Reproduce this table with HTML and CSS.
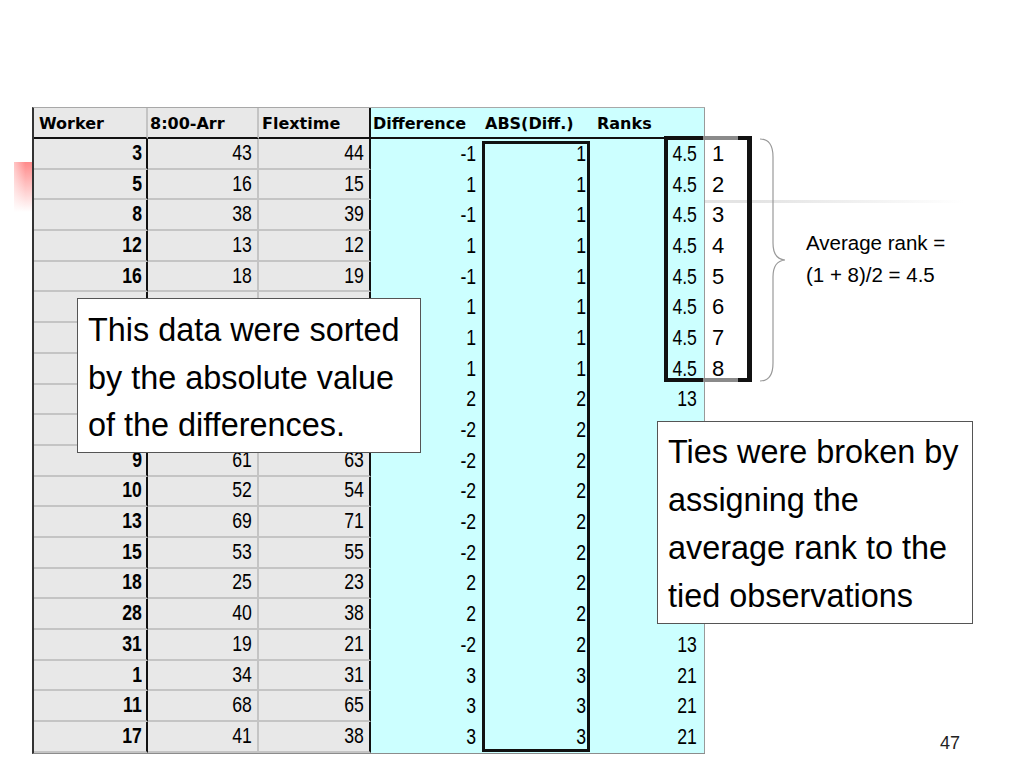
FILE: index.html
```html
<!DOCTYPE html>
<html>
<head>
<meta charset="utf-8">
<title>Ranks</title>
<link rel="stylesheet" href="styles.css">
</head>
<body>
<div class="slide">
  <div class="deco-red"></div>
  <div class="deco-line"></div>

  <div class="tbl">
    <div class="h g c1">Worker</div>
    <div class="h g c2">8:00-Arr</div>
    <div class="h g c3">Flextime</div>
    <div class="h b c4">Difference</div>
    <div class="h b c5">ABS(Diff.)</div>
    <div class="h b c6">Ranks</div>

    <div class="d g c1 w"><span>3</span></div><div class="d g c2"><span>43</span></div><div class="d g c3"><span>44</span></div><div class="d b c4"><span>-1</span></div><div class="d b c5"><span>1</span></div><div class="d b c6"><span>4.5</span></div>
    <div class="d g c1 w"><span>5</span></div><div class="d g c2"><span>16</span></div><div class="d g c3"><span>15</span></div><div class="d b c4"><span>1</span></div><div class="d b c5"><span>1</span></div><div class="d b c6"><span>4.5</span></div>
    <div class="d g c1 w"><span>8</span></div><div class="d g c2"><span>38</span></div><div class="d g c3"><span>39</span></div><div class="d b c4"><span>-1</span></div><div class="d b c5"><span>1</span></div><div class="d b c6"><span>4.5</span></div>
    <div class="d g c1 w"><span>12</span></div><div class="d g c2"><span>13</span></div><div class="d g c3"><span>12</span></div><div class="d b c4"><span>1</span></div><div class="d b c5"><span>1</span></div><div class="d b c6"><span>4.5</span></div>
    <div class="d g c1 w"><span>16</span></div><div class="d g c2"><span>18</span></div><div class="d g c3"><span>19</span></div><div class="d b c4"><span>-1</span></div><div class="d b c5"><span>1</span></div><div class="d b c6"><span>4.5</span></div>
    <div class="d g c1 w"><span>20</span></div><div class="d g c2"><span>27</span></div><div class="d g c3"><span>26</span></div><div class="d b c4"><span>1</span></div><div class="d b c5"><span>1</span></div><div class="d b c6"><span>4.5</span></div>
    <div class="d g c1 w"><span>23</span></div><div class="d g c2"><span>44</span></div><div class="d g c3"><span>43</span></div><div class="d b c4"><span>1</span></div><div class="d b c5"><span>1</span></div><div class="d b c6"><span>4.5</span></div>
    <div class="d g c1 w"><span>27</span></div><div class="d g c2"><span>36</span></div><div class="d g c3"><span>35</span></div><div class="d b c4"><span>1</span></div><div class="d b c5"><span>1</span></div><div class="d b c6"><span>4.5</span></div>
    <div class="d g c1 w"><span>2</span></div><div class="d g c2"><span>32</span></div><div class="d g c3"><span>30</span></div><div class="d b c4"><span>2</span></div><div class="d b c5"><span>2</span></div><div class="d b c6"><span>13</span></div>
    <div class="d g c1 w"><span>4</span></div><div class="d g c2"><span>47</span></div><div class="d g c3"><span>49</span></div><div class="d b c4"><span>-2</span></div><div class="d b c5"><span>2</span></div><div class="d b c6"><span>13</span></div>
    <div class="d g c1 w"><span>9</span></div><div class="d g c2"><span>61</span></div><div class="d g c3"><span>63</span></div><div class="d b c4"><span>-2</span></div><div class="d b c5"><span>2</span></div><div class="d b c6"><span>13</span></div>
    <div class="d g c1 w"><span>10</span></div><div class="d g c2"><span>52</span></div><div class="d g c3"><span>54</span></div><div class="d b c4"><span>-2</span></div><div class="d b c5"><span>2</span></div><div class="d b c6"><span>13</span></div>
    <div class="d g c1 w"><span>13</span></div><div class="d g c2"><span>69</span></div><div class="d g c3"><span>71</span></div><div class="d b c4"><span>-2</span></div><div class="d b c5"><span>2</span></div><div class="d b c6"><span>13</span></div>
    <div class="d g c1 w"><span>15</span></div><div class="d g c2"><span>53</span></div><div class="d g c3"><span>55</span></div><div class="d b c4"><span>-2</span></div><div class="d b c5"><span>2</span></div><div class="d b c6"><span>13</span></div>
    <div class="d g c1 w"><span>18</span></div><div class="d g c2"><span>25</span></div><div class="d g c3"><span>23</span></div><div class="d b c4"><span>2</span></div><div class="d b c5"><span>2</span></div><div class="d b c6"><span>13</span></div>
    <div class="d g c1 w"><span>28</span></div><div class="d g c2"><span>40</span></div><div class="d g c3"><span>38</span></div><div class="d b c4"><span>2</span></div><div class="d b c5"><span>2</span></div><div class="d b c6"><span>13</span></div>
    <div class="d g c1 w"><span>31</span></div><div class="d g c2"><span>19</span></div><div class="d g c3"><span>21</span></div><div class="d b c4"><span>-2</span></div><div class="d b c5"><span>2</span></div><div class="d b c6"><span>13</span></div>
    <div class="d g c1 w"><span>1</span></div><div class="d g c2"><span>34</span></div><div class="d g c3"><span>31</span></div><div class="d b c4"><span>3</span></div><div class="d b c5"><span>3</span></div><div class="d b c6"><span>21</span></div>
    <div class="d g c1 w"><span>11</span></div><div class="d g c2"><span>68</span></div><div class="d g c3"><span>65</span></div><div class="d b c4"><span>3</span></div><div class="d b c5"><span>3</span></div><div class="d b c6"><span>21</span></div>
    <div class="d g c1 w"><span>17</span></div><div class="d g c2"><span>41</span></div><div class="d g c3"><span>38</span></div><div class="d b c4"><span>3</span></div><div class="d b c5"><span>3</span></div><div class="d b c6"><span>21</span></div>
  </div>

  <div class="abs-box"></div>

  <div class="rank-box">
    <div class="rank-nums">
      <span>1</span><span>2</span><span>3</span><span>4</span><span>5</span><span>6</span><span>7</span><span>8</span>
    </div>
  </div>

  <svg class="brace" width="36" height="246" viewBox="0 0 36 246">
    <path d="M5 2 Q18 2 18 20 L18 106 Q18 122 30 123 Q18 124 18 140 L18 226 Q18 244 5 244" fill="none" stroke="#9a9a9a" stroke-width="1.2"/>
  </svg>

  <div class="avg-note">Average rank =<br>(1 + 8)/2 = 4.5</div>

  <div class="callout callout-sort">This data were sorted<br>by the absolute value<br>of the differences.</div>
  <div class="callout callout-ties">Ties were broken by<br>assigning the<br>average rank to the<br>tied observations</div>

  <div class="page-num">47</div>
</div>
</body>
</html>
```
FILE: styles.css
```css
html, body {
  margin: 0;
  padding: 0;
  background: #ffffff;
}

.slide {
  position: relative;
  width: 1024px;
  height: 768px;
  overflow: hidden;
  background: #ffffff;
  padding: 107px 0 0 32px;
  box-sizing: border-box;
  font-family: "Liberation Sans", Arial, sans-serif;
  color: #000;
}

.deco-red {
  position: absolute;
  left: 14px;
  top: 162px;
  width: 19px;
  height: 50px;
  background:
    linear-gradient(90deg, rgba(255,255,255,0.5) 0%, rgba(255,255,255,0) 60%),
    linear-gradient(180deg, #ff8a8a 0%, #ffc0c0 45%, #ffffff 100%);
}

.deco-line {
  position: absolute;
  left: 34px;
  top: 200px;
  width: 930px;
  height: 3px;
  background: linear-gradient(90deg, #e2e2e2 0%, #e4e4e4 78%, #f2f2f2 90%, rgba(255,255,255,0) 100%);
}

.tbl {
  position: relative;
  display: grid;
  grid-template-columns: 114px 111px 112px 111px 108px 115px;
  grid-template-rows: 31px repeat(20, 30.7px);
  width: fit-content;
  border-left: 2px solid #333;
  border-top: 1px solid #a8a8a8;
  border-bottom: 1px solid #8c8c8c;
}

.tbl > div {
  box-sizing: border-box;
  display: flex;
  align-items: center;
  white-space: nowrap;
}

.g { background: #e8e8e8; }
.b { background: #ccffff; }

.h {
  font-family: "DejaVu Sans", sans-serif;
  font-weight: bold;
  font-size: 16px;
  border-bottom: 2px solid #111;
  justify-content: flex-start;
  padding-top: 1px;
}
.h.c1 { padding-left: 5px; border-right: 2px solid #c4c4c4; }
.h.c2 { padding-left: 2px; border-right: 2px solid #c4c4c4; }
.h.c3 { padding-left: 3px; border-right: 2px solid #111; }
.h.c4 { padding-left: 2px; }
.h.c5 { padding-left: 3px; }
.h.c6 { padding-left: 7px; border-right: 1px solid #999; }

.d {
  font-family: "Liberation Sans", Arial, sans-serif;
  font-size: 21.5px;
  justify-content: flex-end;
}
.d span {
  display: inline-block;
  transform: scaleX(0.82);
  transform-origin: 100% 50%;
}
.d.g { border-bottom: 2px solid #c4c4c4; }
.d.w { font-weight: bold; }
.d.c1 { padding-right: 4px; border-right: 2px solid #111; }
.d.c2 { padding-right: 5px; border-right: 2px solid #c4c4c4; }
.d.c3 { padding-right: 5px; border-right: 2px solid #111; }
.d.c4 { padding-right: 6px; }
.d.c5 { padding-right: 4px; }
.d.c6 { padding-right: 7px; border-right: 1px solid #999; }

.abs-box {
  position: absolute;
  left: 482px;
  top: 141px;
  width: 108px;
  height: 611px;
  box-sizing: border-box;
  border: 3px solid #111;
}

.rank-box {
  position: absolute;
  left: 664px;
  top: 136px;
  width: 88px;
  height: 246px;
  box-sizing: border-box;
  border-left: 4px solid #111;
  border-right: 5px solid #111;
  padding-top: 4px;
}
.rank-box::before,
.rank-box::after {
  content: "";
  position: absolute;
  left: -4px;
  right: -5px;
  height: 4px;
  background: linear-gradient(90deg, #111 0, #111 39px, #8a8a8a 39px, #8a8a8a 74px, #111 74px, #111 100%);
}
.rank-box::before { top: 0; }
.rank-box::after { bottom: 0; }

.rank-nums {
  display: flex;
  flex-direction: column;
  padding-left: 44px;
}
.rank-nums span {
  display: block;
  height: 30.7px;
  line-height: 28px;
  font-family: "Liberation Sans", Arial, sans-serif;
  font-size: 22px;
}

.brace {
  position: absolute;
  left: 755px;
  top: 137px;
}

.avg-note {
  position: absolute;
  left: 806px;
  top: 227px;
  font-size: 20.5px;
  line-height: 32px;
}

.callout {
  position: absolute;
  box-sizing: border-box;
  background: #fff;
  border: 1.5px solid #555;
  font-size: 32.4px;
  white-space: nowrap;
}
.callout-sort {
  left: 77px;
  top: 298px;
  width: 344px;
  height: 155px;
  padding: 8px 0 0 10px;
  line-height: 47.5px;
}
.callout-ties {
  left: 657px;
  top: 421px;
  width: 316px;
  height: 203px;
  padding: 6px 0 0 10px;
  line-height: 48px;
}

.page-num {
  position: absolute;
  left: 940px;
  top: 733px;
  font-size: 18px;
  color: #222;
}
```
